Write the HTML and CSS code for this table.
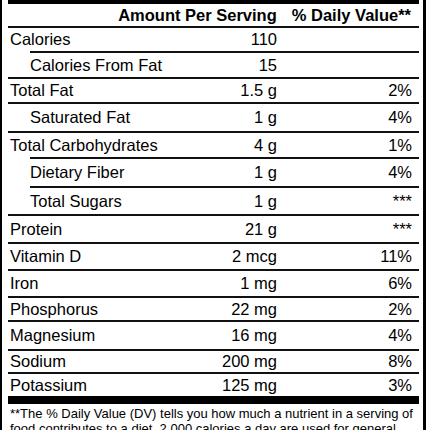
FILE: index.html
```html
<!DOCTYPE html>
<html lang="en">

<head>
    <meta charset="UTF-8">
    <meta name="viewport" content="width=device-width, initial-scale=1.0">
    <title>Nutrition Facts</title>
    <link rel="stylesheet" href="styles.css">
</head>

<body>
    <div class="label">
        <div class="bar"></div>
        <div class="head">
            <span>Amount Per Serving</span>
            <span>% Daily Value**</span>
        </div>
        <div class="rule"></div>

        <div class="row h23"><span>Calories</span><span>110</span><span></span></div>
        <div class="rule sub"></div>
        <div class="row h24 in"><span>Calories From Fat</span><span>15</span><span></span></div>
        <div class="rule"></div>
        <div class="row h23"><span>Total Fat</span><span>1.5 g</span><span>2%</span></div>
        <div class="rule"></div>
        <div class="row h27 in"><span>Saturated Fat</span><span>1 g</span><span>4%</span></div>
        <div class="rule"></div>
        <div class="row h24"><span>Total Carbohydrates</span><span>4 g</span><span>1%</span></div>
        <div class="rule sub"></div>
        <div class="row h27 in"><span>Dietary Fiber</span><span>1 g</span><span>4%</span></div>
        <div class="rule sub"></div>
        <div class="row h26 in"><span>Total Sugars</span><span>1 g</span><span>***</span></div>
        <div class="rule"></div>
        <div class="row h26"><span>Protein</span><span>21 g</span><span>***</span></div>
        <div class="rule"></div>
        <div class="row h25"><span>Vitamin D</span><span>2 mcg</span><span>11%</span></div>
        <div class="rule"></div>
        <div class="row h25"><span>Iron</span><span>1 mg</span><span>6%</span></div>
        <div class="rule"></div>
        <div class="row h22"><span>Phosphorus</span><span>22 mg</span><span>2%</span></div>
        <div class="rule"></div>
        <div class="row h27"><span>Magnesium</span><span>16 mg</span><span>4%</span></div>
        <div class="rule"></div>
        <div class="row h21"><span>Sodium</span><span>200 mg</span><span>8%</span></div>
        <div class="rule"></div>
        <div class="row h22"><span>Potassium</span><span>125 mg</span><span>3%</span></div>

        <div class="bar thick"></div>
        <p class="note">**The % Daily Value (DV) tells you how much a nutrient in a serving of food contributes to a diet. 2,000 calories a day are used for general nutrition advice.</p>
    </div>
</body>

</html>
```

FILE: styles.css
```css
* {
    margin: 0;
    padding: 0;
    box-sizing: border-box;
}

body {
    background: #fff;
    color: #000;
    font-family: "Liberation Sans", Arial, sans-serif;
    overflow: hidden;
}

.label {
    width: 426px;
    height: 430px;
    border-left: 2px solid #000;
    border-right: 3px solid #000;
    padding: 0 4px 0 6px;
    overflow: hidden;
}

.bar {
    height: 4px;
    background: #000;
}

.bar.thick {
    height: 8px;
}

.head {
    display: flex;
    justify-content: flex-end;
    align-items: center;
    gap: 15px;
    height: 22px;
    padding-right: 8px;
    font-size: 16.5px;
    font-weight: bold;
}

.rule {
    height: 2px;
    background: #111;
}

.rule.sub {
    margin-left: 22px;
}

.row {
    display: grid;
    grid-template-columns: minmax(0, 1fr) 120px 135px;
    align-items: center;
    padding: 0 7px 0 2px;
    font-size: 16.5px;
    white-space: nowrap;
}

.row span:nth-child(2),
.row span:nth-child(3) {
    text-align: right;
}

.row.in span:first-child {
    padding-left: 20px;
}

.h21 { height: 21px; }
.h22 { height: 22px; }
.h23 { height: 23px; }
.h24 { height: 24px; }
.h25 { height: 25px; }
.h26 { height: 26px; }
.h27 { height: 27px; }

.note {
    padding: 2px 0 0 2px;
    font-size: 13px;
    line-height: 15px;
}
```
